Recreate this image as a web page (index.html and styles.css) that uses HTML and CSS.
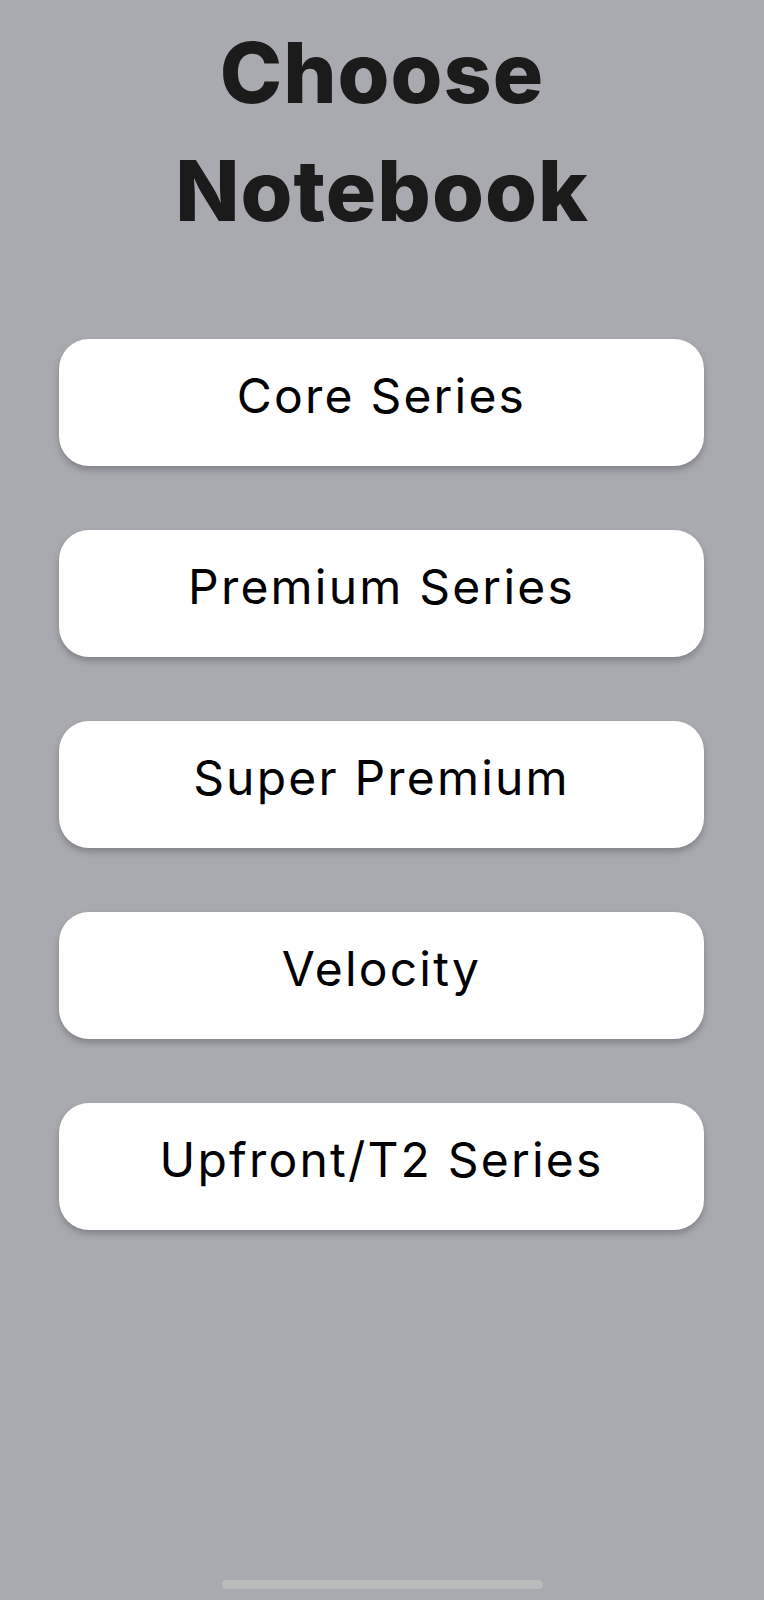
FILE: index.html
```html
<!DOCTYPE html>
<html lang="en">
<head>
<meta charset="utf-8">
<title>Choose Notebook</title>
<link rel="stylesheet" href="styles.css">
</head>
<body>
<main class="screen">
  <h1 class="title">Choose<br>Notebook</h1>
  <nav class="options">
    <button class="option">Core Series</button>
    <button class="option">Premium Series</button>
    <button class="option">Super Premium</button>
    <button class="option">Velocity</button>
    <button class="option">Upfront/T2 Series</button>
  </nav>
  <div class="home-indicator"></div>
</main>
</body>
</html>
```

FILE: styles.css
```css
html, body {
  margin: 0;
  padding: 0;
  background: #a9aaaf;
}
.screen {
  width: 764px;
  height: 1600px;
  display: flex;
  flex-direction: column;
  align-items: center;
  box-sizing: border-box;
  position: relative;
}
.title {
  margin: 14px 0 0 0;
  font-family: Inter, "Liberation Sans", sans-serif;
  font-weight: 800;
  font-size: 84px;
  line-height: 118px;
  letter-spacing: 1px;
  color: #1b1b1c;
  text-align: center;
}
.options {
  margin-top: 89px;
  width: 100%;
  padding: 0 60px 0 59px;
  box-sizing: border-box;
  display: flex;
  flex-direction: column;
  gap: 64px;
}
.option {
  height: 127px;
  border: none;
  border-radius: 30px;
  background: #ffffff;
  box-shadow: 0 4px 6px rgba(60, 60, 70, 0.35);
  font-family: Inter, "Liberation Sans", sans-serif;
  font-weight: 400;
  font-size: 48px;
  letter-spacing: 2.2px;
  color: #000;
  padding: 0 0 14px 0;
  cursor: pointer;
}
.home-indicator {
  position: absolute;
  left: 222px;
  top: 1580px;
  width: 321px;
  height: 9px;
  border-radius: 5px;
  background: #babbbc;
}
```
